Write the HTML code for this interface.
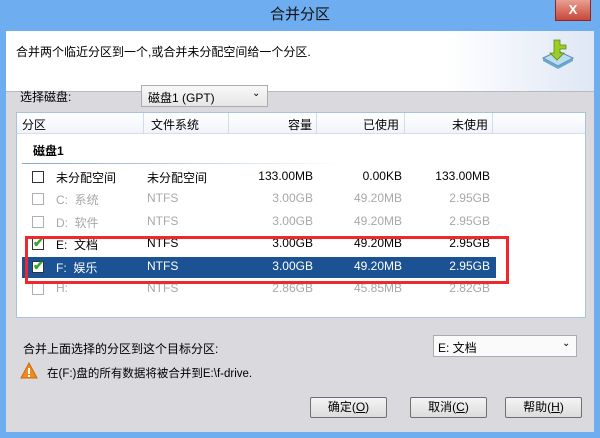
<!DOCTYPE html><html><head><meta charset="utf-8"><style>
*{margin:0;padding:0;box-sizing:border-box}
body{width:600px;height:438px;background:#6eaef0;font-family:"Liberation Sans","Noto Sans CJK SC",sans-serif;font-size:12px;color:#000;position:relative;overflow:hidden}
.a{position:absolute}
.title{left:0;top:0;width:600px;height:30px;text-align:center;line-height:30px;font-size:15px;color:#111}
.close{left:555px;top:0;width:36px;height:21px;background:linear-gradient(#e8a090,#c9463a);border:1px solid #8a2a20;border-top:none;color:#fff;font-weight:bold;text-align:center;line-height:20px;font-size:13px}
.client{left:6px;top:31px;width:588px;height:401px;background:#d9d9de}
.hdr{left:6px;top:31px;width:588px;height:61px;background:linear-gradient(90deg,#fff 75%,#dfe7f5);border-bottom:1px solid #b8b8c0}
.list{left:16px;top:112px;width:570px;height:206px;background:#fff;border:1px solid #a9c2e0}
.lh{left:17px;top:113px;width:568px;height:21px;background:linear-gradient(#fff,#f0f4fa);border-bottom:1px solid #d5dfec}
.sep{top:113px;width:1px;height:21px;background:#cfdcee}
.r{text-align:right}
.g{color:#a8a8a8}
.cb{width:12px;height:12px;border:1px solid #333;background:#fff}
.cbg{border-color:#b0b0b0}
.btn{width:77px;height:21px;border:1px solid #707070;border-radius:2px;background:linear-gradient(#f4f4f4,#dcdcdc);text-align:center;line-height:19px}
.dd{border:1px solid #acacac;background:linear-gradient(#f8f8f8,#e6e6e6)}
</style></head><body>
<div class="a title">合并分区</div>
<div class="a close">X</div>
<div class="a client"></div>
<div class="a hdr"></div>
<div class="a" style="left:16px;top:43px">合并两个临近分区到一个,或合并未分配空间给一个分区.</div>
<svg class="a" style="left:540px;top:38px" width="36" height="32" viewBox="0 0 36 32"><path d="M3 20 L18 13 L33 20 L18 28 Z" fill="#b9dcf0" stroke="#5a8ab0"/><path d="M3 20 L3 23 L18 31 L33 23 L33 20 L18 28Z" fill="#6aa8d0"/><path d="M14 2 h6 v5 h6 v4 h-6 v4 h4 l-7 7 -7 -7 h4z" fill="#9ccc28" stroke="#5a8a10" stroke-width=".8"/></svg>
<div class="a" style="left:20px;top:90px;line-height:14px">选择磁盘:</div>
<div class="a dd" style="left:141px;top:85px;width:127px;height:22px"><span class="a" style="left:6px;top:3px">磁盘1 (GPT)</span><span class="a" style="left:110px;top:2px;font-size:10px">⌄</span></div>
<div class="a list"></div>
<div class="a lh"></div>
<div class="a sep" style="left:143px"></div><div class="a sep" style="left:228px"></div><div class="a sep" style="left:316px"></div><div class="a sep" style="left:404px"></div><div class="a sep" style="left:492px"></div>
<div class="a" style="left:22px;top:116px">分区</div>
<div class="a" style="left:151px;top:116px">文件系统</div>
<div class="a r" style="left:240px;top:116px;width:72px">容量</div>
<div class="a r" style="left:330px;top:116px;width:69px">已使用</div>
<div class="a r" style="left:420px;top:116px;width:68px">未使用</div>
<div class="a" style="left:33px;top:142px;font-weight:bold">磁盘1</div>
<div class="a" style="left:22px;top:163px;width:320px;height:1px;background:linear-gradient(90deg,#7fa7d0,#fff)"></div>
<div class="a" style="left:22px;top:257px;width:474px;height:21px;background:#1a5294"></div>
<div id="rows"></div>
<div class="a" style="left:25px;top:236px;width:484px;height:48px;border:3px solid #f0282c"></div>
<div class="a" style="left:23px;top:340px">合并上面选择的分区到这个目标分区:</div>
<div class="a dd" style="left:433px;top:335px;width:144px;height:22px;background:#fafafa"><span class="a" style="left:4px;top:3px">E: 文档</span><span class="a" style="left:128px;top:2px;font-size:10px">⌄</span></div>
<svg class="a" style="left:20px;top:362px" width="18" height="17"><path d="M9 1 L17 16 L1 16Z" fill="#f08a1a" stroke="#c86a10"/><rect x="8" y="6" width="2" height="6" fill="#fff"/><rect x="8" y="13" width="2" height="2" fill="#fff"/></svg>
<div class="a" style="left:47px;top:365px;font-size:11.5px">在(F:)盘的所有数据将被合并到E:\f-drive.</div>
<div class="a btn" style="left:310px;top:397px">确定(<u>O</u>)</div>
<div class="a btn" style="left:410px;top:397px">取消(<u>C</u>)</div>
<div class="a btn" style="left:505px;top:397px">帮助(<u>H</u>)</div>
<script>
var d=[["未分配空间","未分配空间","133.00MB","0.00KB","133.00MB",0,0],["C:&nbsp; 系统","NTFS","3.00GB","49.20MB","2.95GB",1,0],["D:&nbsp; 软件","NTFS","3.00GB","49.20MB","2.95GB",1,0],["E:&nbsp; 文档","NTFS","3.00GB","49.20MB","2.95GB",0,1],["F:&nbsp; 娱乐","NTFS","3.00GB","49.20MB","2.95GB",0,2],["H:","NTFS","2.86GB","45.85MB","2.82GB",1,0]];
var h="";d.forEach(function(r,i){var y=169+i*22.4;var c=r[5]?"g":"";var st=r[6]==2?"color:#fff;":"";
h+='<div class="a cb '+(r[5]?'cbg':'')+'" style="left:32px;top:'+(y+2)+'px">'+(r[6]?'<span style="position:absolute;left:0;top:-4px;color:#2aa82a;font-weight:bold;font-size:13px">✔</span>':'')+'</div>';
h+='<div class="a '+c+'" style="'+st+'left:56px;top:'+y+'px">'+r[0]+'</div>';
h+='<div class="a '+c+'" style="'+st+'left:147px;top:'+y+'px">'+r[1]+'</div>';
h+='<div class="a r '+c+'" style="'+st+'left:213px;top:'+y+'px;width:100px">'+r[2]+'</div>';
h+='<div class="a r '+c+'" style="'+st+'left:300px;top:'+y+'px;width:102px">'+r[3]+'</div>';
h+='<div class="a r '+c+'" style="'+st+'left:390px;top:'+y+'px;width:100px">'+r[4]+'</div>';});
document.getElementById("rows").innerHTML=h;
</script>
</body></html>
